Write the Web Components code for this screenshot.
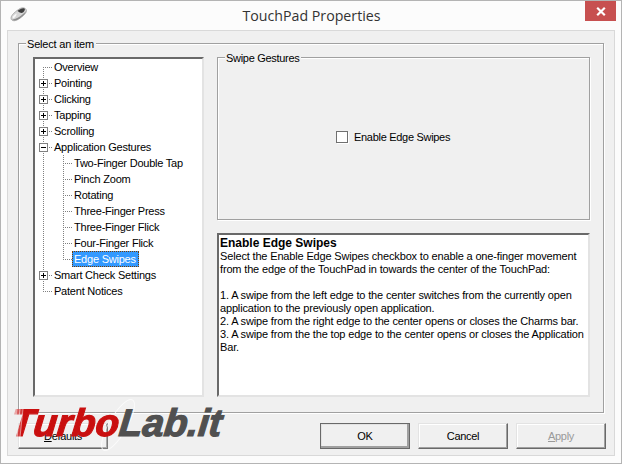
<!DOCTYPE html>
<html>
<head>
<meta charset="utf-8">
<title>TouchPad Properties</title>
<style>
  html, body { margin: 0; padding: 0; background: #fcfcfc; }
  body { font: 11px "Liberation Sans", Arial, sans-serif; letter-spacing: -0.3px; color: #000; }
</style>
</head>
<body>
<tp-window>
  <tp-titlebar slot="title">TouchPad Properties</tp-titlebar>

  <tp-group label="Select an item" class="outer">
    <tp-columns>
      <tp-tree slot="left">
        <tp-item first expander="none">Overview</tp-item>
        <tp-item expander="plus">Pointing</tp-item>
        <tp-item expander="plus">Clicking</tp-item>
        <tp-item expander="plus">Tapping</tp-item>
        <tp-item expander="plus">Scrolling</tp-item>
        <tp-item expander="minus">Application Gestures</tp-item>
        <tp-item level="1">Two-Finger Double Tap</tp-item>
        <tp-item level="1">Pinch Zoom</tp-item>
        <tp-item level="1">Rotating</tp-item>
        <tp-item level="1">Three-Finger Press</tp-item>
        <tp-item level="1">Three-Finger Flick</tp-item>
        <tp-item level="1">Four-Finger Flick</tp-item>
        <tp-item level="1" end selected>Edge Swipes</tp-item>
        <tp-item expander="plus">Smart Check Settings</tp-item>
        <tp-item end expander="none">Patent Notices</tp-item>
      </tp-tree>
      <tp-swipe-panel slot="right"></tp-swipe-panel>
      <tp-help slot="right">
        <b>Enable Edge Swipes</b><br>
        Select the Enable Edge Swipes checkbox to enable a one-finger movement<br>
        from the edge of the TouchPad in towards the center of the TouchPad:<br>
        <br>
        1. A swipe from the left edge to the center switches from the currently open<br>
        application to the previously open application.<br>
        2. A swipe from the right edge to the center opens or closes the Charms bar.<br>
        3. A swipe from the the top edge to the center opens or closes the Application<br>
        Bar.
      </tp-help>
    </tp-columns>
  </tp-group>

  <tp-actions>
    <tp-button slot="left"><u>D</u>efaults</tp-button>
    <tp-button default>OK</tp-button>
    <tp-button>Cancel</tp-button>
    <tp-button disabled><u>A</u>pply</tp-button>
  </tp-actions>
</tp-window>
<tp-watermark></tp-watermark>

<script>
// Helper comune: ogni componente crea il proprio shadow root aperto
class TpBase extends HTMLElement {
  constructor() {
    super();
    this.attachShadow({ mode: 'open' });
    this.shadowRoot.innerHTML = this.constructor.markup;
  }
}

class TpWindow extends TpBase {
  static markup = `
    <style>
      :host { display: flex; flex-direction: column; box-sizing: border-box; width: 622px; height: 464px;
              border: 1px solid #b4b4b4; background: #fcfcfc; }
      .client { display: flex; flex-direction: column; margin: 0 6px 6px 6px; height: 426px; box-sizing: border-box;
                background: #f0f0f0; border: 1px solid #d9d9d9; padding: 12px 10px 0 10px; }
    </style>
    <slot name="title"></slot>
    <div class="client"><slot></slot></div>`;
}

class TpTitlebar extends TpBase {
  static markup = `
    <style>
      :host { display: flex; align-items: flex-start; height: 29px; flex: none; position: relative; }
      .icon { margin: 6px 0 0 9px; width: 18px; height: 15px; flex: none; }
      .text { position: absolute; left: 1px; right: 0; top: 5px; text-align: center; font: 14.2px/20px "Open Sans", sans-serif; letter-spacing: 0; color: #333; }
      .close { margin-left: auto; margin-right: 5px; width: 31px; height: 20px; background: #c75050; display: flex; align-items: center; justify-content: center; z-index: 1; }
    </style>
    <svg class="icon" viewBox="0 0 18 15">
      <path d="M1 11 C1 8 6 4 10 1.5 C13 0 16 1 16.500 3.500 C17 6 11 11 7 13 C3.500 14.500 1 13.500 1 11Z" fill="#d6d6d6" stroke="#9a9a9a" stroke-width=".7"/>
      <path d="M2 12.500 C5 13 12 9 16 4 C15.500 7 11 11 7 13 C5 13.800 3 13.600 2 12.500Z" fill="#8c8c8c"/>
      <path d="M7.500 4 C9 2.500 12 .8 14.500 1.400 C15.500 2 14.500 4 13 5.500 C11.500 6.500 10 6 7.500 4Z" fill="#3e3e3e"/>
      <path d="M2.500 10 C3.500 8.500 5 7.500 6.500 6.500 C7 8 5 10.500 3.500 11.500Z" fill="#f8f8f8"/>
    </svg>
    <span class="text"><slot></slot></span>
    <div class="close">
      <svg width="10" height="9" viewBox="0 0 10 9"><path d="M1.2 .8 L8.8 8.2 M8.8 .8 L1.2 8.2" stroke="#fff" stroke-width="2.2" fill="none"/></svg>
    </div>`;
}

// Group box con etichetta sopra il bordo
class TpGroup extends TpBase {
  static markup = `
    <style>
      :host { display: block; position: relative; box-sizing: border-box; border: 1px solid #a0a0a0; box-shadow: inset 1px 1px 0 #fff, 1px 1px 0 #fff; }
      .label { position: absolute; left: 7px; top: -7px; background: #f0f0f0; padding: 0 2px 0 1px; line-height: 14px; white-space: nowrap; letter-spacing: -0.2px; }
    </style>
    <span class="label"></span>
    <slot></slot>`;
  connectedCallback() {
    this.shadowRoot.querySelector('.label').textContent = this.getAttribute('label');
  }
}

class TpColumns extends TpBase {
  static markup = `
    <style>
      :host { display: flex; gap: 13px; height: 368px; box-sizing: border-box; padding: 13px 0 15px 14px; }
      .right { display: flex; flex-direction: column; gap: 13px; width: 373px; flex: none; }
    </style>
    <slot name="left"></slot>
    <div class="right"><slot name="right"></slot></div>`;
}

class TpTree extends TpBase {
  static markup = `
    <style>
      :host { display: block; box-sizing: border-box; width: 171px; flex: none; background: #fff; letter-spacing: -0.22px;
              border: 2px solid; border-color: #696969 #e3e3e3 #e3e3e3 #696969; }
    </style>
    <slot></slot>`;
}

// Riga dell'albero: livello, expander e linee tratteggiate
class TpItem extends TpBase {
  static markup = `
    <style>
      :host { display: flex; align-items: center; position: relative; height: 16px; padding-left: 17px; white-space: nowrap; color: #000; }
      :host([level="1"]) { padding-left: 37px; }
      .v, .h, .v2 { position: absolute; }
      .v { left: 8px; top: 0; bottom: 0; width: 1px; background: repeating-linear-gradient(#808080 0 1px, transparent 1px 2px); }
      :host([first]) .v { top: 8px; }
      :host([end]:not([level])) .v { bottom: 7px; }
      .v2 { display: none; left: 28px; top: 0; bottom: 0; width: 1px; background: repeating-linear-gradient(#808080 0 1px, transparent 1px 2px); }
      :host([level="1"]) .v2 { display: block; }
      :host([level="1"][end]) .v2 { bottom: 7px; }
      .h { left: 9px; top: 8px; width: 8px; height: 1px; background: repeating-linear-gradient(90deg, transparent 0 1px, #808080 1px 2px); }
      :host([level="1"]) .h { left: 29px; }
      .box { display: none; position: absolute; left: 4px; top: 4px; width: 9px; height: 9px; box-sizing: border-box; border: 1px solid #808080; background: #fff; }
      :host([expander="plus"]) .box, :host([expander="minus"]) .box { display: block; }
      .box::before { content: ""; position: absolute; left: 1px; top: 3px; width: 5px; height: 1px; background: #000; }
      .box::after { content: ""; position: absolute; left: 3px; top: 1px; width: 1px; height: 5px; background: #000; display: none; }
      :host([expander="plus"]) .box::after { display: block; }
      .label { box-sizing: border-box; padding: 0 1px; height: 16px; line-height: 14px; border: 1px solid transparent; }
      :host([selected]) .label { background: #3399ff; color: #fff; border: 1px dotted #7a3d00; padding-right: 2px; }
    </style>
    <span class="v"></span><span class="v2"></span><span class="h"></span><span class="box"></span>
    <span class="label"><slot></slot></span>`;
}

class TpSwipePanel extends TpBase {
  static markup = `
    <style>
      :host { display: flex; position: relative; height: 163px; flex: none; box-sizing: border-box; border: 1px solid #a0a0a0;
              box-shadow: inset 1px 1px 0 #fff, 1px 1px 0 #fff; align-items: center; padding: 0 0 4px 118px; }
      .label { position: absolute; left: 7px; top: -7px; background: #f0f0f0; padding: 0 2px 0 1px; line-height: 14px; }
      .box { width: 12px; height: 12px; box-sizing: border-box; background: #fff; border: 1px solid #707070; box-shadow: 1px 1px 0 #fff; margin-right: 6px; flex: none; }
    </style>
    <span class="label">Swipe Gestures</span>
    <span class="box"></span><span>Enable Edge Swipes</span>`;
}

class TpHelp extends TpBase {
  static markup = `
    <style>
      :host { display: block; flex: 1; box-sizing: border-box; background: #fff; border: 2px solid; border-color: #696969 #e3e3e3 #e3e3e3 #696969;
              padding: 2px 1px; line-height: 13px; white-space: nowrap; overflow: hidden; letter-spacing: -0.16px; }
      ::slotted(b) { font-size: 12px; letter-spacing: 0; }
    </style>
    <slot></slot>`;
}

class TpActions extends TpBase {
  static markup = `
    <style>
      :host { display: flex; gap: 8px; margin: 10px -2px 0 0; }
      .spacer { flex: 1; display: flex; }
    </style>
    <div class="spacer"><slot name="left"></slot></div>
    <slot></slot>`;
}

class TpButton extends TpBase {
  static markup = `
    <style>
      :host { display: flex; align-items: center; justify-content: center; box-sizing: border-box; width: 90px; height: 26px; background: #f0f0f0;
              border: 1px solid; border-color: #e3e3e3 #696969 #696969 #e3e3e3; box-shadow: inset -1px -1px 0 #a0a0a0, inset 1px 1px 0 #fff; }
      :host([default]) { border-color: #696969; box-shadow: inset -2px -2px 0 #a0a0a0, inset 1px 1px 0 #e3e3e3; }
      :host([disabled]) { color: #9a9a9a; }
    </style>
    <slot></slot>`;
}

// Filigrana sovrapposta allo screenshot
class TpWatermark extends TpBase {
  static markup = `
    <style>
      :host { position: absolute; left: 11px; top: 401px; width: 220px; height: 50px; letter-spacing: 0; }
      svg { position: absolute; left: 87px; top: -5px; }
      .text { position: absolute; left: 0; top: 0; font: italic 700 38.5px/44px "Liberation Sans", sans-serif; white-space: nowrap;
              -webkit-text-stroke: 1.2px currentColor; transform: skewX(-6deg); }
      .a { color: transparent; -webkit-text-stroke-color: transparent;
           background: linear-gradient(90deg, #e9a5a5 0 5px, #d65a5a 5px 7px, #eab0b0 7px 8px, #d23c3c 8px 10px, #e58a8a 10px 11px, #c90f0f 11px);
           -webkit-background-clip: text; background-clip: text; }
      .b { color: #505050; }
    </style>
    <svg width="40" height="58" viewBox="0 0 40 58"><ellipse cx="20" cy="29" rx="9" ry="29" transform="rotate(30 20 29)" fill="rgba(255,255,255,.12)" stroke="rgba(255,255,255,.7)" stroke-width="1"/></svg>
    <div class="text"><span class="a">Turbo</span><span class="b">Lab.it</span></div>`;
}

customElements.define('tp-window', TpWindow);
customElements.define('tp-titlebar', TpTitlebar);
customElements.define('tp-group', TpGroup);
customElements.define('tp-columns', TpColumns);
customElements.define('tp-tree', TpTree);
customElements.define('tp-item', TpItem);
customElements.define('tp-swipe-panel', TpSwipePanel);
customElements.define('tp-help', TpHelp);
customElements.define('tp-actions', TpActions);
customElements.define('tp-button', TpButton);
customElements.define('tp-watermark', TpWatermark);
</script>
</body>
</html>
